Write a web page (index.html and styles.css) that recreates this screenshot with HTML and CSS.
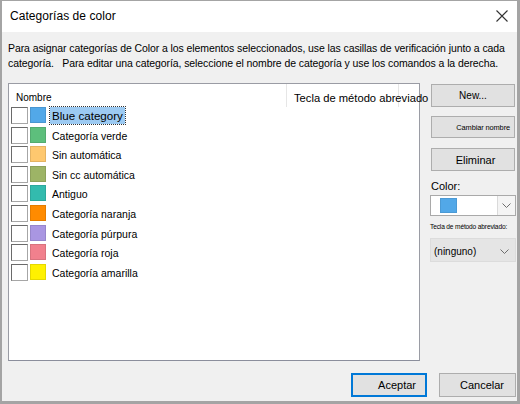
FILE: index.html
```html
<!DOCTYPE html>
<html lang="es">
<head>
<meta charset="utf-8">
<title>Categorías de color</title>
<link rel="stylesheet" href="styles.css">
</head>
<body>
<div class="dialog">
  <div class="titlebar">
    <span class="title">Categorías de color</span>
    <svg class="close" width="12" height="12" viewBox="0 0 12 12"><path d="M0.5 0.5L11.5 11.5M11.5 0.5L0.5 11.5" stroke="#333" stroke-width="1.1" fill="none"/></svg>
  </div>
  <div class="content">
    <p class="desc">Para asignar categorías de Color a los elementos seleccionados, use las casillas de verificación junto a cada<br>categoría.&nbsp;&nbsp; Para editar una categoría, seleccione el nombre de categoría y use los comandos a la derecha.</p>
    <div class="main">
      <div class="list">
        <div class="list-head">
          <div class="col col-name">Nombre</div>
          <div class="col col-key">Tecla de método abreviado</div>
          <div class="col col-rest"></div>
        </div>
        <div class="rows">
          <div class="row"><span class="check"></span><span class="swatch c-blue"></span><span class="label selected">Blue category</span></div>
          <div class="row"><span class="check"></span><span class="swatch c-green"></span><span class="label">Categoría verde</span></div>
          <div class="row"><span class="check"></span><span class="swatch c-peach"></span><span class="label">Sin automática</span></div>
          <div class="row"><span class="check"></span><span class="swatch c-olive"></span><span class="label">Sin cc automática</span></div>
          <div class="row"><span class="check"></span><span class="swatch c-teal"></span><span class="label">Antiguo</span></div>
          <div class="row"><span class="check"></span><span class="swatch c-orange"></span><span class="label">Categoría naranja</span></div>
          <div class="row"><span class="check"></span><span class="swatch c-purple"></span><span class="label">Categoría púrpura</span></div>
          <div class="row"><span class="check"></span><span class="swatch c-red"></span><span class="label">Categoría roja</span></div>
          <div class="row"><span class="check"></span><span class="swatch c-yellow"></span><span class="label">Categoría amarilla</span></div>
        </div>
      </div>
      <div class="side">
        <button class="btn btn-new">New...</button>
        <button class="btn btn-rename">Cambiar nombre</button>
        <button class="btn btn-delete">Eliminar</button>
        <div class="side-label">Color:</div>
        <div class="combo">
          <div class="combo-value"><span class="combo-swatch"></span></div>
          <div class="combo-btn"><svg width="9" height="5" viewBox="0 0 9 5"><path d="M0.5 0.5L4.5 4.5L8.5 0.5" stroke="#6d6d6d" fill="none"/></svg></div>
        </div>
        <div class="tiny-label">Tecla de método abreviado:</div>
        <div class="select">
          <span>(ninguno)</span>
          <svg width="9" height="5" viewBox="0 0 9 5"><path d="M0.5 0.5L4.5 4.5L8.5 0.5" stroke="#6d6d6d" fill="none"/></svg>
        </div>
      </div>
    </div>
    <div class="footer">
      <button class="btn btn-ok">Aceptar</button>
      <button class="btn btn-cancel">Cancelar</button>
    </div>
  </div>
</div>
</body>
</html>
```
FILE: styles.css
```css
* { box-sizing: border-box; }
html, body { margin: 0; padding: 0; }
body {
  width: 520px;
  height: 404px;
  font-family: "Liberation Sans", Arial, sans-serif;
  color: #000;
  background: #f0f0f0;
  overflow: hidden;
}
.dialog {
  width: 520px;
  height: 404px;
  border-style: solid;
  border-color: #a4a4a4;
  border-width: 1px 3px 3px 2px;
  display: flex;
  flex-direction: column;
  background: #f0f0f0;
}
.titlebar {
  height: 31px;
  flex: none;
  background: #fff;
  display: flex;
  align-items: center;
  justify-content: space-between;
  padding: 0 9px 2px 8px;
}
.title {
  font-size: 12px;
  letter-spacing: 0.05px;
}
.close { display: block; margin-top: 1px; }
.content {
  flex: 1;
  padding: 9px 1px 4px 6px;
  display: flex;
  flex-direction: column;
}
.desc {
  margin: 0;
  font-size: 10.5px;
  line-height: 15px;
  white-space: nowrap;
  letter-spacing: -0.09px;
}
.main {
  margin-top: 12px;
  height: 278px;
  display: flex;
  gap: 11px;
}
.list {
  width: 412px;
  height: 278px;
  background: #fff;
  border: 1px solid #9a9ca4;
  border-bottom-color: #8b8e9c;
}
.list-head {
  height: 23px;
  display: flex;
}
.col {
  font-size: 10px;
  line-height: 12px;
  padding-top: 8px;
  white-space: nowrap;
}
.col-name {
  width: 278px;
  padding-left: 7px;
  border-right: 1px solid #e6e6e6;
}
.col-key {
  width: 112px;
  padding-left: 7px;
  font-size: 11.2px;
  border-right: 1px solid #e6e6e6;
}
.col-rest { flex: 1; }
.rows { display: flex; flex-direction: column; }
.row {
  height: 19.6px;
  display: flex;
  align-items: flex-start;
  padding-left: 2px;
}
.check {
  width: 17px;
  height: 17px;
  flex: none;
  background: #fff;
  border: 1px solid;
  border-color: #6a6a6a #a6a6a6 #a6a6a6 #6a6a6a;
}
.swatch {
  width: 16px;
  height: 16px;
  flex: none;
  margin-left: 2px;
  border: 1px solid rgba(0,0,0,0.1);
}
.c-blue { background: #52a8e8; }
.c-green { background: #5dbf7c; }
.c-peach { background: #fec86f; }
.c-olive { background: #9db466; }
.c-teal { background: #33bbae; }
.c-orange { background: #ff8b00; }
.c-purple { background: #a996e2; }
.c-red { background: #f1808d; }
.c-yellow { background: #fff100; }
.label {
  margin-left: 4px;
  font-size: 10.5px;
  line-height: 17px;
  margin-top: 1px;
  padding: 0 2px;
  white-space: nowrap;
}
.label.selected {
  margin-left: 4px;
  margin-top: 0;
  font-size: 11.6px;
  line-height: 15px;
  background: #9ccaf2;
  outline: 1px dotted #333;
  outline-offset: 0;
  padding: 1px 2px;
}
.side {
  width: 85px;
  display: flex;
  flex-direction: column;
  padding-top: 1px;
}
.btn {
  font-family: "Liberation Sans", Arial, sans-serif;
  background: #e1e1e1;
  border: 1px solid #adadad;
  color: #000;
  padding: 0;
  margin: 0;
  width: 84px;
}
.btn-new { height: 23px; font-size: 10px; }
.btn-rename {
  height: 22px;
  margin-top: 9px;
  font-size: 7.4px;
  text-align: right;
  padding-right: 4px;
  letter-spacing: -0.1px;
}
.btn-delete { height: 23px; margin-top: 10px; font-size: 11px; padding-left: 5px; }
.side-label {
  margin-top: 8px;
  font-size: 11px;
  line-height: 14px;
}
.combo {
  margin-top: 2px;
  margin-left: -1px;
  width: 86px;
  height: 21px;
  display: flex;
  background: #fff;
  border: 1px solid #a9a9a9;
}
.combo-value {
  flex: 1;
  padding: 2px 0 0 9px;
}
.combo-swatch {
  display: block;
  width: 17px;
  height: 15px;
  background: #52a8e8;
  border: 1px solid rgba(0,0,0,0.08);
}
.combo-btn {
  width: 18px;
  border-left: 1px solid #dadada;
  background: #f4f4f4;
  display: flex;
  align-items: center;
  justify-content: center;
}
.tiny-label {
  margin-top: 6px;
  margin-left: -1px;
  font-size: 6.6px;
  line-height: 10px;
  white-space: nowrap;
  letter-spacing: -0.15px;
}
.select {
  margin-top: 6px;
  margin-left: -1px;
  width: 86px;
  height: 24px;
  background: #e5e5e5;
  border: 1px solid #dcdcdc;
  display: flex;
  align-items: center;
  justify-content: space-between;
  padding: 2px 6px 0 3px;
  font-size: 10px;
}
.footer {
  margin-top: 12px;
  display: flex;
  justify-content: flex-end;
  gap: 12px;
}
.btn-ok {
  width: 76px;
  height: 24px;
  font-size: 11px;
  border: 2px solid #0078d7;
  text-align: right;
  padding-right: 9px;
}
.btn-cancel {
  width: 77px;
  height: 24px;
  font-size: 11px;
  padding-left: 9px;
}
```
